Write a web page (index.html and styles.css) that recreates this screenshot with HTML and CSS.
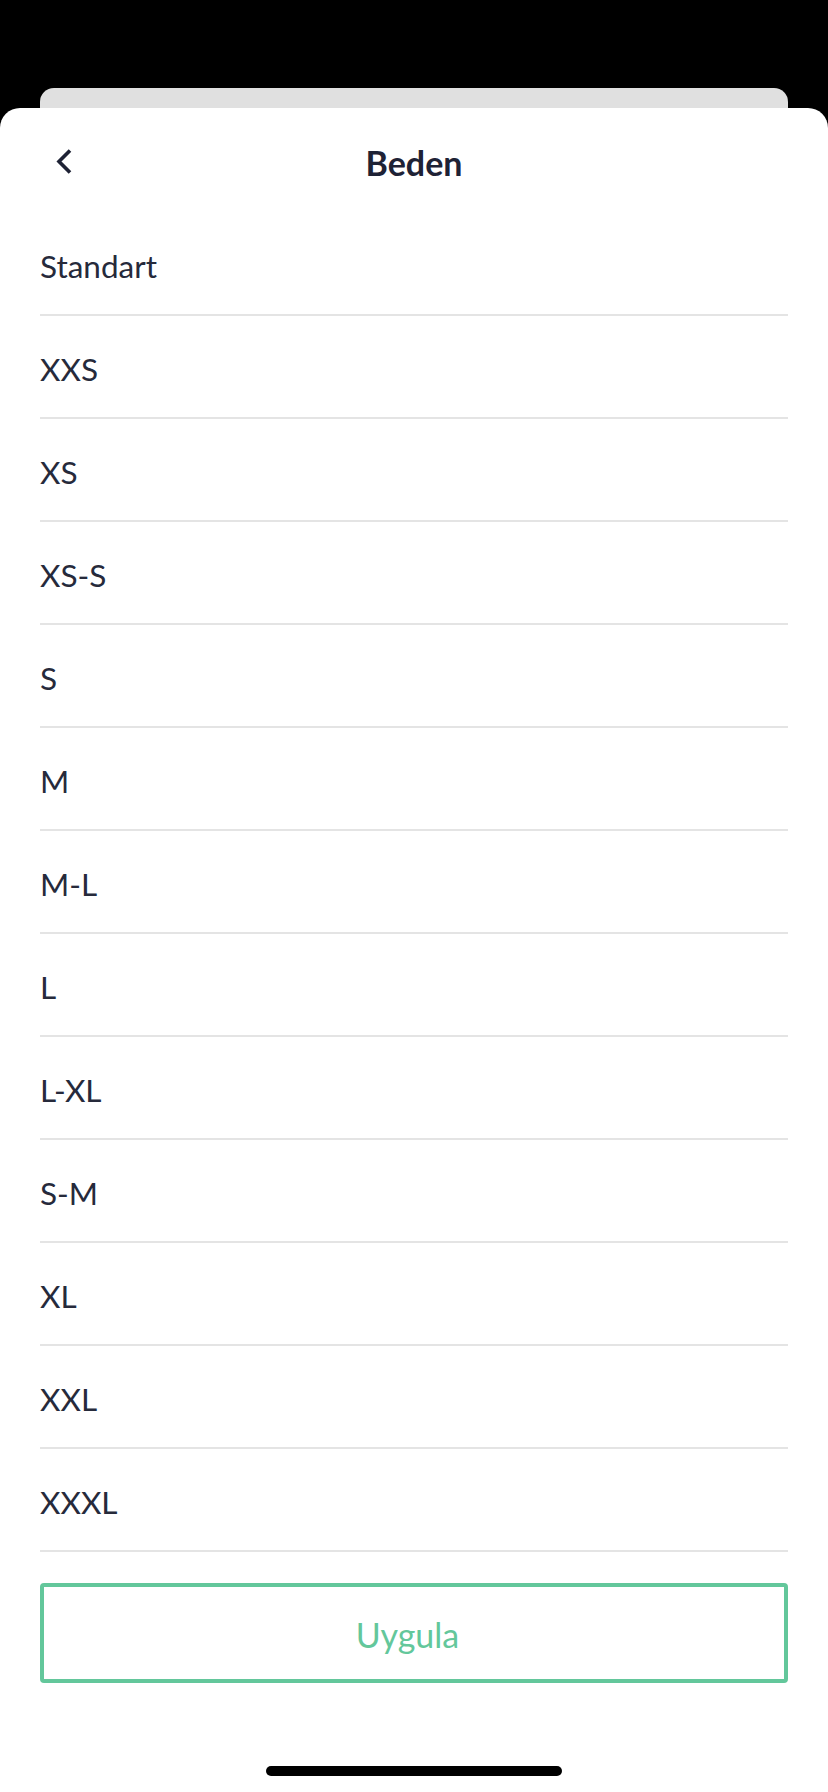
FILE: index.html
```html
<!DOCTYPE html>
<html lang="tr">
<head>
<meta charset="utf-8">
<title>Beden</title>
<link rel="stylesheet" href="styles.css">
</head>
<body>
<div class="screen">
  <div class="back-card"></div>
  <div class="sheet">
    <header class="sheet-header">
      <button class="back-btn" aria-label="Geri">
        <svg width="18" height="28" viewBox="0 0 18 28">
          <path d="M15 2.5 L4 13.5 L15 24.5" fill="none" stroke="#1e2235" stroke-width="3.6" stroke-linecap="butt" stroke-linejoin="miter"/>
        </svg>
      </button>
      <h1 class="title">Beden</h1>
    </header>
    <ul class="size-list">
      <li class="size-item">Standart</li>
      <li class="size-item">XXS</li>
      <li class="size-item">XS</li>
      <li class="size-item">XS-S</li>
      <li class="size-item">S</li>
      <li class="size-item">M</li>
      <li class="size-item">M-L</li>
      <li class="size-item">L</li>
      <li class="size-item">L-XL</li>
      <li class="size-item">S-M</li>
      <li class="size-item">XL</li>
      <li class="size-item">XXL</li>
      <li class="size-item">XXXL</li>
    </ul>
    <div class="actions">
      <button class="apply-btn">Uygula</button>
    </div>
    <div class="home-bar"><span class="home-indicator"></span></div>
  </div>
</div>
</body>
</html>
```

FILE: styles.css
```css
* { box-sizing: border-box; }

html, body {
  margin: 0;
  padding: 0;
  background: #000;
}

body {
  font-family: Lato, "Noto Sans", "Liberation Sans", sans-serif;
  color: #1e2235;
}

.screen {
  display: flex;
  flex-direction: column;
  height: 1792px;
  padding-top: 88px;
}

.back-card {
  height: 20px;
  margin: 0 40px;
  background: #e0e0e0;
  border-radius: 14px 14px 0 0;
  flex: none;
}

.sheet {
  flex: 1;
  background: #fff;
  border-radius: 20px 20px 0 0;
  display: flex;
  flex-direction: column;
  padding: 0 40px;
}

.sheet-header {
  height: 105px;
  display: flex;
  align-items: center;
  justify-content: center;
  position: relative;
  padding-top: 4px;
}

.back-btn {
  position: absolute;
  left: 15px;
  top: 40px;
  background: none;
  border: 0;
  padding: 0;
  width: 18px;
  height: 28px;
  display: flex;
}

.title {
  margin: 0;
  font-size: 34px;
  font-weight: 700;
  color: #1e2235;
  letter-spacing: 0;
}

.size-list {
  list-style: none;
  margin: 0;
  padding: 0;
}

.size-item {
  height: 103px;
  border-bottom: 2px solid #e4e4e4;
  display: flex;
  align-items: center;
  padding-top: 4px;
  font-size: 31.5px;
  font-weight: 400;
  color: #262a3b;
}

.actions {
  margin-top: 31px;
}

.apply-btn {
  width: 100%;
  height: 100px;
  background: #fff;
  border: 4px solid #63c79b;
  border-radius: 4px;
  color: #63c79b;
  font-family: Lato, "Noto Sans", "Liberation Sans", sans-serif;
  font-size: 34px;
  font-weight: 400;
  padding: 2px 13px 0 0;
}

.home-bar {
  margin-top: 83px;
  display: flex;
  justify-content: center;
}

.home-indicator {
  display: block;
  width: 296px;
  height: 10px;
  border-radius: 5px;
  background: #000;
}
```
